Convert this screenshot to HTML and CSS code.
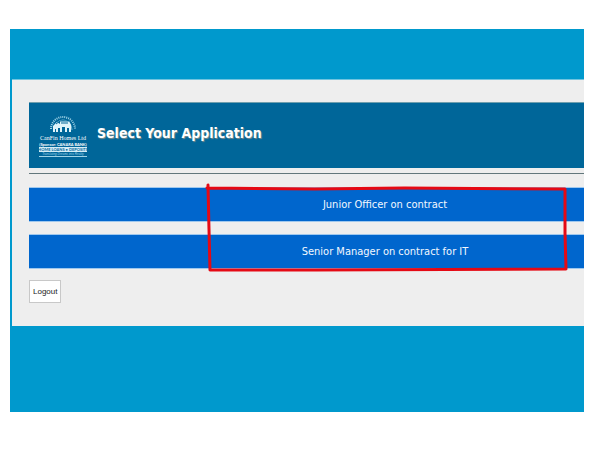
FILE: index.html
```html
<!DOCTYPE html>
<html lang="en">
<head>
<meta charset="utf-8">
<meta name="viewport" content="width=device-width, initial-scale=1">
<title>Select Your Application</title>
<link rel="stylesheet" href="styles.css">
</head>
<body>
<div class="page">
  <main class="panel">
    <header class="banner">
      <svg class="logo" viewBox="0 0 50 44" role="img" aria-label="Can Fin Homes Ltd">
        <path class="arch" d="M13 15a12 12 0 0 1 24 0"/>
        <path class="arch-inner" d="M16 16a9 10 0 0 1 18 0"/>
        <path class="house" d="M15 18v-6l4-4 3 2v-3h9l2 4v7h-2v-4h-2v4h-2v-5h-3v5h-2v-4h-2v4h-2v-3h-1v3z"/>
        <path class="roof" d="M18 10l4-3h9M23 9h7"/>
        <text class="logo-name" x="25" y="26" text-anchor="middle">CanFin Homes Ltd</text>
        <text class="logo-sponsor" x="25" y="32" text-anchor="middle">(Sponsor: CANARA BANK)</text>
        <rect class="logo-strip" x="1" y="33" width="48" height="5"/>
        <text class="logo-services" x="25" y="37" text-anchor="middle">HOME LOANS • DEPOSITS</text>
        <text class="logo-motto" x="25" y="41" text-anchor="middle">Translating Dreams into Reality</text>
        <path class="logo-rule" d="M1 42.5h48"/>
      </svg>
      <h1 class="title">Select Your Application</h1>
    </header>
    <hr class="rule">
    <div class="choices">
      <button class="choice" type="button">Junior Officer on contract</button>
      <button class="choice" type="button">Senior Manager on contract for IT</button>
      <svg class="marker" viewBox="0 0 364 90" preserveAspectRatio="none" aria-hidden="true">
        <path d="M3 2L4 46L5 87L110 87L362 86L361 50L361 6L200 5L110 6L2 5"/>
      </svg>
    </div>
    <button class="logout" type="button">Logout</button>
  </main>
</div>
</body>
</html>
```

FILE: styles.css
```css
* {
  box-sizing: border-box;
}

body {
  margin: 0;
  background: #fff;
  font-family: "DejaVu Sans Condensed", "DejaVu Sans", Tahoma, sans-serif;
}

.page {
  margin: 29px 16px 38px 10px;
  padding: 50px 0 86px 2px;
  background: #0099cd;
}

.panel {
  padding: 22px 0 23px 17px;
  background: #eee;
  border-top: 1px solid #70c4df;
}

.banner {
  display: flex;
  align-items: center;
  gap: 9px;
  min-height: 66px;
  padding: 0 9px;
  background: #006699;
  border-top: 1px solid #6f9fae;
}

.logo {
  flex: none;
  width: 50px;
  height: 44px;
}

.logo text {
  fill: #fff;
}

.arch,
.arch-inner,
.roof,
.logo-rule {
  fill: none;
  stroke: #9ed3e6;
  stroke-width: 1;
}

.arch {
  stroke-width: 2;
  stroke-dasharray: 1 1;
}

.arch-inner {
  stroke: #70b4d0;
}

.house {
  fill: #dff4fa;
}

.roof {
  stroke: #006699;
}

.logo-strip {
  fill: #d5edf6;
}

.logo .logo-name {
  font: 6px "Liberation Serif", serif;
}

.logo .logo-sponsor {
  font: bold 4px Lato, "Liberation Sans", sans-serif;
}

.logo .logo-services {
  font: bold 4px Lato, "Liberation Sans", sans-serif;
  fill: #006699;
}

.logo .logo-motto {
  font: italic 3px "Liberation Sans", sans-serif;
  fill: #9ed3e6;
}

.title {
  margin: 0;
  padding-bottom: 5px;
  color: #fff;
  font-size: 14px;
  line-height: 20px;
  text-shadow: 1px 1px 1px #7d8c8c;
}

.rule {
  height: 1px;
  margin: 5px 0 13px;
  border: 0;
  background: #62777c;
}

.choices {
  position: relative;
  display: grid;
  gap: 12px;
}

.choice {
  height: 35px;
  padding: 0 0 0 157px;
  border: 0;
  border-top: 1px solid #9fc8ee;
  border-bottom: 1px solid #9fc8ee;
  border-radius: 0;
  background: #0066cd;
  color: #f2f8ff;
  font-family: inherit;
  font-size: 11px;
}

/* Hand-drawn outline laid over both choices */
.marker {
  position: absolute;
  top: -4px;
  left: 176px;
  width: calc(100% - 192px);
  height: 90px;
  overflow: visible;
  pointer-events: none;
}

.marker path {
  fill: none;
  stroke: #e50914;
  stroke-width: 3;
  stroke-linecap: round;
  stroke-linejoin: round;
}

.logout {
  display: block;
  height: 23px;
  margin-top: 11px;
  padding: 0 3px;
  border: 1px solid #c8c8c8;
  border-radius: 0;
  background: #fff;
  color: #222;
  font-family: "Liberation Sans", sans-serif;
  font-size: 8px;
}
```
